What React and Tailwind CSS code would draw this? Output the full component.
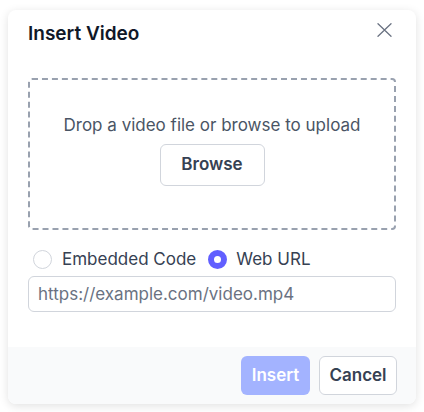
import React, { useState } from "react";

export default function App() {
  const [mode, setMode] = useState("url");
  return (
    <div className="min-h-[412px] bg-white pl-2 pr-2 pt-[10px]" style={{ fontFamily: "Inter, 'Noto Sans', sans-serif" }}>
      <div className="w-[408px] rounded-lg bg-white shadow-[0_2px_10px_rgba(0,0,0,0.12)] overflow-hidden">
        {/* header */}
        <div className="flex items-start justify-between pl-5 pr-[24px] pt-[10px]">
          <h2 className="text-[19px] font-semibold leading-7 text-gray-900">Insert Video</h2>
          <button className="mt-[3px] text-gray-500">
            <svg width="15" height="14" viewBox="0 0 15 14" fill="none" stroke="currentColor" strokeWidth="1.3" strokeLinecap="round">
              <path d="M1 0.8l13 12.4M14 0.8l-13 12.4" />
            </svg>
          </button>
        </div>

        <div className="px-5 pt-[30px] pb-[35px]">
          {/* drop zone */}
          <div className="flex flex-col items-center rounded border-2 border-dashed border-gray-400 pt-[33px] pb-[42px]">
            <p className="text-[17px] leading-6 text-gray-600">Drop a video file or browse to upload</p>
            <button className="mt-[7px] h-[42px] w-[105px] rounded-md border border-gray-300 bg-white text-[17px] font-semibold text-gray-700">
              Browse
            </button>
          </div>

          {/* source type */}
          <div className="mt-[17px] flex items-center pl-[5px]">
            <label className="flex items-center gap-[10px]" onClick={() => setMode("embed")}>
              <span className={mode === "embed" ? "h-[19px] w-[19px] rounded-full border-[6px] border-indigo-500 bg-white" : "h-[19px] w-[19px] rounded-full border border-gray-300 bg-white"} />
              <span className="text-[17px] leading-6 text-gray-700">Embedded Code</span>
            </label>
            <label className="ml-3 flex items-center gap-[9px]" onClick={() => setMode("url")}>
              <span className={mode === "url" ? "h-[19px] w-[19px] rounded-full border-[6px] border-indigo-500 bg-white" : "h-[19px] w-[19px] rounded-full border border-gray-300 bg-white"} />
              <span className="text-[17px] leading-6 text-gray-700">Web URL</span>
            </label>
          </div>

          <input
            className="mt-[5px] h-9 w-full rounded-md border border-gray-300 px-[9px] text-[17px] text-gray-700 placeholder:text-gray-500 outline-none"
            placeholder="https://example.com/video.mp4"
          />
        </div>

        {/* footer */}
        <div className="flex justify-end gap-[9px] bg-gray-50 pt-[9px] pb-[9px] pr-[19px]">
          <button className="h-[39px] w-[69px] rounded-md bg-indigo-300 text-[17px] font-semibold text-white">Insert</button>
          <button className="h-[39px] w-[78px] rounded-md border border-gray-300 bg-white text-[17px] font-semibold text-gray-700">Cancel</button>
        </div>
      </div>
    </div>
  );
}
